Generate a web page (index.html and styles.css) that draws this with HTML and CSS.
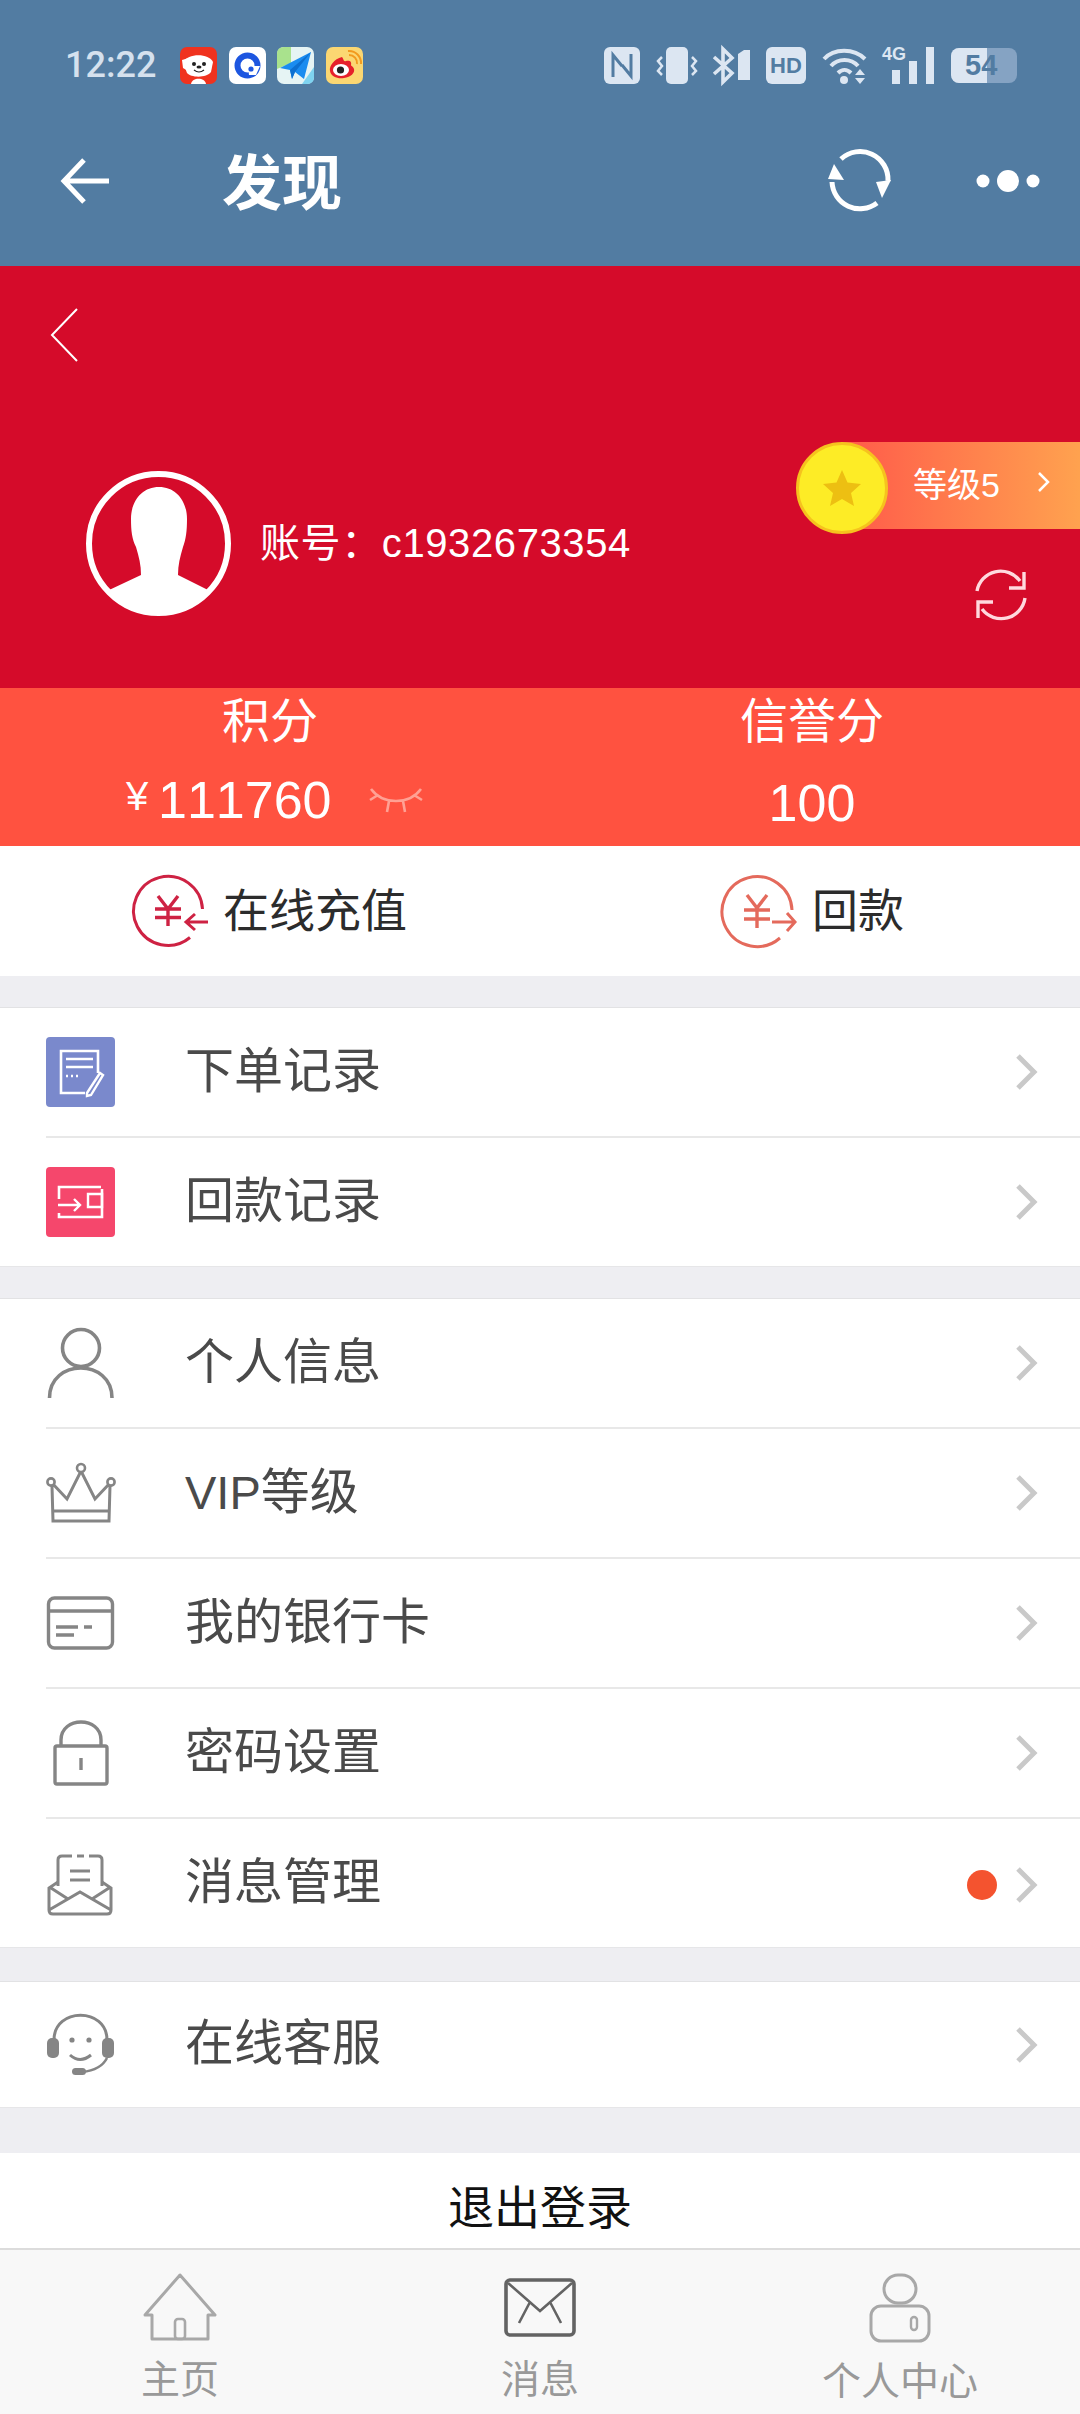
FILE: index.html
```html
<!DOCTYPE html>
<html>
<head>
    <meta charset="utf-8">
    <title>发现</title>
    <link rel="stylesheet" href="styles.css">
</head>
<body>
    <div class="page">
        <!-- status bar + webview title -->
        <header class="topbar">
            <div class="statusbar">
                <span class="time">12:22</span>
                <div class="apps">
                    <svg width="37" height="37" viewBox="0 0 37 37"><rect width="37" height="37" rx="7" fill="#f0321e"/><path d="M3 15 C8 6 29 6 33 15 L31 25 C27 31 11 31 7 26Z" fill="#fff"/><path d="M2 13 L9 11 L8 24 L3 21Z" fill="#fff"/><path d="M11 37 C12 30 25 30 26 37Z" fill="#fff"/><circle cx="14" cy="17" r="2" fill="#222"/><circle cx="24" cy="17" r="2" fill="#222"/><ellipse cx="19" cy="20" rx="2.5" ry="1.6" fill="#222"/><path d="M14 23 Q19 27 24 23" fill="none" stroke="#222" stroke-width="1.2"/></svg>
                    <svg width="37" height="37" viewBox="0 0 37 37"><rect width="37" height="37" rx="7" fill="#fff"/><circle cx="18.5" cy="18.5" r="10" fill="none" stroke="#1d56e0" stroke-width="6"/><path d="M19 19 L31 19 L27 28 L20 28Z" fill="#fff"/><circle cx="22" cy="22" r="2.6" fill="#1d56e0"/></svg>
                    <svg width="37" height="37" viewBox="0 0 37 37"><rect width="37" height="37" rx="7" fill="#e6f4f4"/><path d="M0 7 Q0 0 7 0 H14 L14 16 L0 22Z" fill="#a9e28d"/><path d="M25 37 L37 20 V30 Q37 37 30 37Z" fill="#7ed3f0"/><path d="M3 21 L34 5 L27 32 L18 25 L15 32 L13 23Z" fill="#1a8cf0"/><path d="M13 23 L34 5 L18 25 L15 32Z" fill="#0c6fd0"/></svg>
                    <svg width="37" height="37" viewBox="0 0 37 37"><rect width="37" height="37" rx="7" fill="#fbd772"/><path d="M16 10 C8 12 3 19 4 24 C5 30 12 32 18 31 C25 30 29 26 28 22 C27 19 25 19 25 18 C26 14 23 13 20 14 C17 15 18 12 16 10Z" fill="#e6202a"/><ellipse cx="15" cy="23" rx="8" ry="6" fill="#fff"/><circle cx="14.5" cy="23" r="3.6" fill="#222"/><path d="M23 8 A8 8 0 0 1 31 17 M22 4 A12 12 0 0 1 35 17" fill="none" stroke="#f29a1e" stroke-width="2"/></svg>
                </div>
                <div class="sysicons">
                    <svg width="36" height="37" viewBox="0 0 36 37"><rect width="36" height="37" rx="6" fill="#dce6f2"/><path d="M9 30 V8 L18 19 M27 7 V29 L18 18" fill="none" stroke="#527ca2" stroke-width="3"/></svg>
                    <svg class="vibrate" width="40" height="37" viewBox="0 0 40 37"><rect x="9" width="22" height="37" rx="5" fill="#dce6f2"/><path d="M5 10 L1 14 L5 19 L1 24 L5 28 M35 10 L39 14 L35 19 L39 24 L35 28" fill="none" stroke="#dce6f2" stroke-width="2.5"/></svg>
                    <svg class="bt" width="38" height="37" viewBox="0 0 38 37"><path d="M2 10 L20 26 L11 35 V2 L20 11 L2 27" fill="none" stroke="#dce6f2" stroke-width="3.6"/><path d="M26 7 L32 3 H38 V33 H26Z" fill="#dce6f2"/></svg>
                    <span class="hd">HD</span>
                    <svg class="wifi" width="46" height="37" viewBox="0 0 46 37"><path d="M2 12 C12 1 32 1 43 12 M9 19 C16 11 29 11 36 19 M16 26 C20 22 25 22 29 26" fill="none" stroke="#dce6f2" stroke-width="4"/><circle cx="22" cy="33" r="4" fill="#dce6f2"/><path d="M33 28 L38 22 L43 28Z M33 31 H43 L38 37Z" fill="#dce6f2"/></svg>
                    <div class="signal">
                        <span class="net">4G</span>
                        <span class="sig sig1"></span><span class="sig sig2"></span><span class="sig sig3"></span>
                    </div>
                    <div class="battery"><div class="battery-fill"></div><span class="battery-num">54</span></div>
                </div>
            </div>
            <div class="navrow">
                <svg class="nav-back" width="50" height="48" viewBox="0 0 50 48"><path d="M24 3 L4 24 L24 45 M4 24 H49" fill="none" stroke="#fff" stroke-width="5"/></svg>
                <span class="nav-title">发现</span>
                <svg class="nav-refresh" width="62" height="62" viewBox="0 0 62 62"><path d="M12 9 A28 28 0 0 1 59 31 M48 53 A28 28 0 0 1 3 32" fill="none" stroke="#fff" stroke-width="5"/><path d="M5 14 L-1 29 L15 30Z M47 32 L62 30 L53 48Z" fill="#fff"/></svg>
                <svg width="64" height="24" viewBox="0 0 64 24"><circle cx="7" cy="12" r="6.5" fill="#fff"/><circle cx="32" cy="12" r="11" fill="#fff"/><circle cx="57" cy="12" r="6.5" fill="#fff"/></svg>
            </div>
        </header>

        <section class="hero">
            <svg class="hero-back" width="30" height="54" viewBox="0 0 30 54"><path d="M28 1 L3 27 L28 53" fill="none" stroke="#fff" stroke-width="2"/></svg>
            <div class="profile">
                <svg class="avatar" width="145" height="145" viewBox="0 0 145 145"><circle cx="72.5" cy="72.5" r="69.5" fill="none" stroke="#fff" stroke-width="6"/><path d="M73 16 C90 16 101 30 101 48 C101 60 100 68 97 76 C94 86 92 94 92 104 L124 120 A70 70 0 0 1 21 120 L55 104 C55 94 53 86 50 76 C46 68 45 60 45 48 C45 30 56 16 73 16Z" fill="#fff"/></svg>
                <span class="account">账号：c1932673354</span>
                <div class="profile-right">
                    <div class="level">
                        <div class="coin">
                            <svg width="40" height="40" viewBox="0 0 40 40"><path d="M20 2 L25.5 14.5 L39 16 L29 25 L32 38 L20 31 L8 38 L11 25 L1 16 L14.5 14.5Z" fill="#edbf12"/></svg>
                        </div>
                        <div class="level-bar">
                            <span>等级5</span>
                            <svg width="13" height="22" viewBox="0 0 13 22"><path d="M2 2 L11 11 L2 20" fill="none" stroke="#fff" stroke-width="2.5"/></svg>
                        </div>
                    </div>
                    <svg class="hero-refresh" width="52" height="52" viewBox="0 0 52 52"><path d="M2 22 A24 24 0 0 1 45 12 M50 29 A24 24 0 0 1 7 40" fill="none" stroke="#ffd9de" stroke-width="3.4"/><path d="M49 3 V19 H34 M3 49 V33 H18" fill="none" stroke="#ffd9de" stroke-width="3.4"/></svg>
                </div>
            </div>
        </section>

        <section class="stats">
            <div class="stat stat-left">
                <div class="stat-label">积分</div>
                <div class="stat-money">
                    <span class="yen">¥</span>
                    <span class="stat-num">111760</span>
                    <svg width="56" height="28" viewBox="0 0 56 28"><path d="M3 3 C15 19 41 19 53 3 M2 14 L10 9 M54 14 L46 9 M19 26 L21 15 M37 26 L35 15" fill="none" stroke="#ffa194" stroke-width="2.6"/></svg>
                </div>
            </div>
            <div class="stat stat-right">
                <div class="stat-label">信誉分</div>
                <div class="stat-num">100</div>
            </div>
        </section>

        <section class="actions">
            <div class="action action-in">
                <svg width="75" height="72" viewBox="0 0 75 72"><path d="M69.5 34 A34.5 34.5 0 1 0 57 62.5" fill="none" stroke="#ce2243" stroke-width="3"/><path d="M25 21 L35 34 L45 21 M35 34 V51 M22 34 H48 M22 42.5 H48" fill="none" stroke="#ce2243" stroke-width="3.4"/><path d="M75 47 H53 M62 39 L53 47 L62 55" fill="none" stroke="#ce2243" stroke-width="3"/></svg>
                <span>在线充值</span>
            </div>
            <div class="action action-out">
                <svg width="75" height="72" viewBox="0 0 75 72"><path d="M70 35 A35 35 0 1 0 58 63" fill="none" stroke="#e46a5c" stroke-width="3"/><path d="M25 20 L35 33 L45 20 M35 33 V53 M22 35 H48 M22 44 H48" fill="none" stroke="#e46a5c" stroke-width="3.4"/><path d="M50 47 H73 M65 38 L73 47 L65 56" fill="none" stroke="#e46a5c" stroke-width="3"/></svg>
                <span>回款</span>
            </div>
        </section>

        <section class="group group-a">
            <div class="row">
                <div class="row-icon">
                    <svg width="69" height="70" viewBox="0 0 69 70"><rect width="69" height="70" rx="4" fill="#7a89cc"/><path d="M39 56 H15 V14 H52 V36" fill="none" stroke="#fff" stroke-width="2.6"/><path d="M20 22 H47 M20 30 H47" stroke="#fff" stroke-width="2.6"/><path d="M20 39 H22 M25 39 H27 M30 39 H32" stroke="#fff" stroke-width="2.4"/><path d="M41 56 L54 36 L57 38 L45 58 L41 59Z" fill="none" stroke="#fff" stroke-width="2.4"/></svg>
                </div>
                <span class="row-text">下单记录</span>
                <svg class="chev" width="22" height="36" viewBox="0 0 22 36"><path d="M3 2 L19 18 L3 34" fill="none" stroke="#c9c9c9" stroke-width="5"/></svg>
            </div>
            <div class="row">
                <div class="row-icon">
                    <svg width="69" height="70" viewBox="0 0 69 70"><rect width="69" height="70" rx="4" fill="#f5476c"/><path d="M13 32 V20 H55 M56 22 V50 H13 V46" fill="none" stroke="#fff" stroke-width="2.6"/><path d="M42 27 H56 V40 H42Z" fill="none" stroke="#fff" stroke-width="2.4"/><path d="M12 38 H34 M28 32 L34 38 L28 44" fill="none" stroke="#fff" stroke-width="2.4"/></svg>
                </div>
                <span class="row-text">回款记录</span>
                <svg class="chev" width="22" height="36" viewBox="0 0 22 36"><path d="M3 2 L19 18 L3 34" fill="none" stroke="#c9c9c9" stroke-width="5"/></svg>
            </div>
        </section>

        <section class="group group-b">
            <div class="row">
                <div class="row-icon">
                    <svg width="69" height="70" viewBox="0 0 69 70"><circle cx="35" cy="20" r="18.5" fill="none" stroke="#858585" stroke-width="3.6"/><path d="M3.5 70 C3.5 30 66 30 66 70" fill="none" stroke="#858585" stroke-width="3.6"/></svg>
                </div>
                <span class="row-text">个人信息</span>
                <svg class="chev" width="22" height="36" viewBox="0 0 22 36"><path d="M3 2 L19 18 L3 34" fill="none" stroke="#c9c9c9" stroke-width="5"/></svg>
            </div>
            <div class="row">
                <div class="row-icon">
                    <svg width="69" height="62" viewBox="0 0 69 62"><path d="M6 24 L7 59 H63 L64 24 M6 21 L21 37 L35 9 L49 37 L64 21 M7 49 H63" fill="none" stroke="#858585" stroke-width="3"/><circle cx="35" cy="6" r="4" fill="#fff" stroke="#858585" stroke-width="2.6"/><circle cx="5" cy="20" r="3.6" fill="#fff" stroke="#858585" stroke-width="2.6"/><circle cx="65" cy="20" r="3.6" fill="#fff" stroke="#858585" stroke-width="2.6"/></svg>
                </div>
                <span class="row-text"><span class="latin">VIP</span>等级</span>
                <svg class="chev" width="22" height="36" viewBox="0 0 22 36"><path d="M3 2 L19 18 L3 34" fill="none" stroke="#c9c9c9" stroke-width="5"/></svg>
            </div>
            <div class="row">
                <div class="row-icon">
                    <svg width="69" height="54" viewBox="0 0 69 54"><rect x="2.5" y="2" width="64" height="50" rx="6" fill="none" stroke="#858585" stroke-width="3.4"/><path d="M3 15 H66" stroke="#858585" stroke-width="3.4"/><path d="M10 31 H32 M38 31 H46 M10 39 H28" stroke="#858585" stroke-width="3.4"/></svg>
                </div>
                <span class="row-text">我的银行卡</span>
                <svg class="chev" width="22" height="36" viewBox="0 0 22 36"><path d="M3 2 L19 18 L3 34" fill="none" stroke="#c9c9c9" stroke-width="5"/></svg>
            </div>
            <div class="row">
                <div class="row-icon">
                    <svg width="69" height="66" viewBox="0 0 69 66"><rect x="9" y="26" width="52" height="38" rx="2" fill="none" stroke="#858585" stroke-width="3.4"/><path d="M15 26 V20 C15 -4 55 -4 55 20 V26" fill="none" stroke="#858585" stroke-width="3.4"/><path d="M35 38 V50" stroke="#858585" stroke-width="3.4"/></svg>
                </div>
                <span class="row-text">密码设置</span>
                <svg class="chev" width="22" height="36" viewBox="0 0 22 36"><path d="M3 2 L19 18 L3 34" fill="none" stroke="#c9c9c9" stroke-width="5"/></svg>
            </div>
            <div class="row row-msg">
                <div class="row-icon">
                    <svg width="69" height="62" viewBox="0 0 69 62"><path d="M12 32 V6 Q12 2 16 2 H26 M31 2 H38 M43 2 H52 Q56 2 56 6 V32" fill="none" stroke="#858585" stroke-width="3"/><path d="M24 17 H44 M24 26 H44" stroke="#858585" stroke-width="3"/><path d="M12 28 L3 34 V56 Q3 60 7 60 H61 Q65 60 65 56 V34 L56 28 M3 56 L34 38 L65 56 M5 34 L22 45 M63 34 L46 45" fill="none" stroke="#858585" stroke-width="3"/></svg>
                </div>
                <span class="row-text">消息管理</span>
                <span class="row-dot"></span>
                <svg class="chev" width="22" height="36" viewBox="0 0 22 36"><path d="M3 2 L19 18 L3 34" fill="none" stroke="#c9c9c9" stroke-width="5"/></svg>
            </div>
        </section>

        <section class="group group-c">
            <div class="row">
                <div class="row-icon">
                    <svg width="69" height="62" viewBox="0 0 69 62"><path d="M8 26 C8 -7 61 -7 61 26" fill="none" stroke="#858585" stroke-width="3"/><rect x="1" y="24" width="12" height="20" rx="5" fill="#858585"/><rect x="56" y="24" width="12" height="20" rx="5" fill="#858585"/><circle cx="26" cy="26" r="2.6" fill="#858585"/><circle cx="43" cy="26" r="2.6" fill="#858585"/><path d="M24 41 Q34 50 45 41" fill="none" stroke="#858585" stroke-width="3"/><path d="M61 44 Q55 56 36 58" fill="none" stroke="#858585" stroke-width="2.6"/><rect x="26" y="54" width="14" height="7" rx="3.5" fill="#858585"/></svg>
                </div>
                <span class="row-text">在线客服</span>
                <svg class="chev" width="22" height="36" viewBox="0 0 22 36"><path d="M3 2 L19 18 L3 34" fill="none" stroke="#c9c9c9" stroke-width="5"/></svg>
            </div>
        </section>

        <div class="logout">退出登录</div>

        <nav class="tabbar">
            <div class="tab">
                <svg width="72" height="68" viewBox="0 0 72 68"><path d="M36 2 L71 42 L64 42 V66 H8 V42 L1 42Z" fill="none" stroke="#a8a8a8" stroke-width="3" stroke-linejoin="round"/><rect x="31" y="46" width="10" height="20" rx="3" fill="none" stroke="#a8a8a8" stroke-width="2.6"/></svg>
                <span>主页</span>
            </div>
            <div class="tab tab-active">
                <svg width="72" height="68" viewBox="0 0 72 68"><rect x="2" y="7" width="68" height="55" rx="4" fill="none" stroke="#636363" stroke-width="3.6"/><path d="M4 10 L36 38 L68 10 M15 50 L26 29 M57 50 L46 29" fill="none" stroke="#636363" stroke-width="2.6"/></svg>
                <span>消息</span>
            </div>
            <div class="tab">
                <svg width="62" height="70" viewBox="0 0 62 70"><rect x="15" y="2" width="32" height="28" rx="14" fill="none" stroke="#a8a8a8" stroke-width="3"/><rect x="2" y="33" width="58" height="35" rx="10" fill="none" stroke="#a8a8a8" stroke-width="3"/><rect x="42" y="44" width="6" height="13" rx="3" fill="none" stroke="#a8a8a8" stroke-width="2.4"/></svg>
                <span>个人中心</span>
            </div>
        </nav>
    </div>
</body>
</html>
```

FILE: styles.css
```css
* {
    box-sizing: border-box;
}

html, body {
    margin: 0;
    padding: 0;
}

body {
    font-family: "Liberation Sans", "Noto Sans CJK SC", sans-serif;
    font-kerning: none;
    background: #eeeef2;
}

svg {
    display: block;
    flex: none;
    overflow: visible;
}

.page {
    width: 1080px;
    height: 2414px;
    overflow: hidden;
    display: flex;
    flex-direction: column;
}

/* top bar */
.topbar {
    height: 266px;
    padding-top: 40px;
    background: #527ca2;
    flex: none;
}

.statusbar {
    display: flex;
    align-items: center;
    height: 50px;
    padding: 0 63px 0 65px;
}

.time {
    width: 115px;
    font-family: Roboto, sans-serif;
    font-size: 36px;
    font-weight: 500;
    color: #d5e1ee;
}

.apps {
    display: flex;
    gap: 11.5px;
}

.sysicons {
    display: flex;
    align-items: center;
    margin-left: auto;
}

.vibrate {
    margin-left: 17px;
}

.bt {
    margin-left: 15px;
}

.hd {
    width: 40px;
    height: 37px;
    margin-left: 16px;
    border-radius: 6px;
    background: #dce6f2;
    color: #527ca2;
    font-size: 22px;
    font-weight: bold;
    line-height: 37px;
    text-align: center;
}

.wifi {
    margin-left: 16px;
}

.signal {
    display: flex;
    align-items: flex-end;
    justify-content: flex-end;
    gap: 9px;
    position: relative;
    width: 52px;
    height: 37px;
    margin-left: 14px;
}

.net {
    position: absolute;
    left: 0;
    top: -3px;
    font-size: 18px;
    font-weight: bold;
    line-height: 20px;
    color: #dce6f2;
}

.sig {
    width: 8px;
    background: #dce6f2;
}

.sig1 {
    height: 14px;
}

.sig2 {
    height: 23px;
}

.sig3 {
    height: 37px;
}

.battery {
    position: relative;
    width: 66px;
    height: 35px;
    margin-left: 17px;
    border-radius: 8px;
    background: #85a3c3;
    overflow: hidden;
}

.battery-fill {
    width: 36px;
    height: 35px;
    background: #dce6f2;
}

.battery-num {
    position: absolute;
    left: 14px;
    top: 2px;
    font-size: 29px;
    font-weight: bold;
    line-height: 31px;
    color: #527ca2;
}

.navrow {
    display: flex;
    align-items: center;
    height: 120px;
    margin-top: 31px;
    padding: 0 40px 0 60px;
}

.nav-title {
    margin: 0 0 6px 112px;
    font-size: 60px;
    font-weight: bold;
    color: #fff;
}

.nav-refresh {
    margin-left: auto;
    margin-right: 85px;
}

/* red profile block */
.hero {
    height: 422px;
    padding-top: 42px;
    background: #d50b2a;
    flex: none;
}

.hero-back {
    margin-left: 49px;
}

.profile {
    display: flex;
    margin-top: 80px;
    padding-left: 86px;
}

.avatar {
    margin-top: 29px;
}

.account {
    margin: 76px 0 0 29px;
    font-size: 40px;
    line-height: 50px;
    letter-spacing: 0.6px;
    color: #fff;
}

.profile-right {
    display: flex;
    flex-direction: column;
    width: 284px;
    margin-left: auto;
}

.level {
    display: flex;
    align-items: flex-start;
}

.coin {
    display: flex;
    align-items: center;
    justify-content: center;
    width: 92px;
    height: 92px;
    margin-right: -46px;
    border: 3px solid #f6c21e;
    border-radius: 50%;
    background: #fdec26;
    position: relative;
    flex: none;
}

.level-bar {
    display: flex;
    align-items: center;
    flex: 1;
    height: 87px;
    padding: 0 30px 7px 71px;
    background: linear-gradient(90deg, #ff5a4a, #ffa24f);
    color: #fff;
    font-size: 34px;
}

.level-bar svg {
    margin-left: auto;
}

.hero-refresh {
    margin: 35px 0 0 179px;
}

/* score strip */
.stats {
    display: flex;
    height: 158px;
    background: #ff5240;
    color: #fff;
    flex: none;
}

.stat {
    width: 540px;
    text-align: center;
}

.stat-right {
    padding-left: 4px;
}

.stat-label {
    height: 66px;
    font-size: 48px;
    line-height: 68px;
}

.stat-money {
    display: flex;
    align-items: center;
    height: 84px;
    padding-left: 126px;
}

.yen {
    width: 32px;
    font-size: 40px;
    line-height: 84px;
    text-align: left;
}

.stat-num {
    font-size: 52px;
    line-height: 84px;
    padding-top: 7px;
}

.stat-money svg {
    margin: 8px 0 0 36px;
}

/* recharge / repay */
.actions {
    display: flex;
    align-items: center;
    height: 130px;
    padding-left: 133px;
    background: #fff;
    color: #2c2c2c;
    font-size: 46px;
    flex: none;
}

.action {
    display: flex;
    align-items: center;
}

.action span {
    margin-bottom: 8px;
}

.action-in {
    width: 589px;
    gap: 15px;
}

.action-out {
    gap: 15px;
}

/* menu lists */
.group {
    display: flex;
    flex-direction: column;
    padding-left: 46px;
    background: #fff;
    border-top: 1px solid #e2e2e4;
    border-bottom: 1px solid #e6e6e8;
    flex: none;
}

.group-a {
    height: 260px;
    margin-top: 31px;
}

.group-b {
    height: 650px;
    margin-top: 31px;
}

.group-c {
    height: 127px;
    margin-top: 33px;
}

.row {
    display: flex;
    align-items: center;
    flex: 1 1 0;
    min-height: 0;
    padding-right: 43px;
    color: #4a4a4a;
    font-size: 49px;
}

.row + .row {
    border-top: 2px solid #e8e8e8;
}

.row-icon {
    width: 139px;
    flex: none;
}

.row-msg .row-icon,
.row-msg .row-dot,
.row-msg .chev {
    margin-top: 4px;
}

.row-text {
    margin: 0 auto 12px 0;
}

.latin {
    font-size: 47px;
}

.row-dot {
    width: 30px;
    height: 30px;
    margin-right: 18px;
    border-radius: 50%;
    background: #f4532f;
}

/* logout + tabs */
.logout {
    height: 95px;
    margin-top: 45px;
    background: #fff;
    color: #111;
    font-size: 46px;
    line-height: 110px;
    text-align: center;
    flex: none;
}

.tabbar {
    display: grid;
    grid-template-columns: repeat(3, 1fr);
    height: 166px;
    padding-top: 23px;
    background: #f8f8f8;
    border-top: 2px solid #dcdcdc;
    flex: none;
}

.tab {
    display: flex;
    flex-direction: column;
    align-items: center;
    color: #999;
    font-size: 39px;
    line-height: 50px;
}

.tab span {
    margin-top: 14px;
}
```
